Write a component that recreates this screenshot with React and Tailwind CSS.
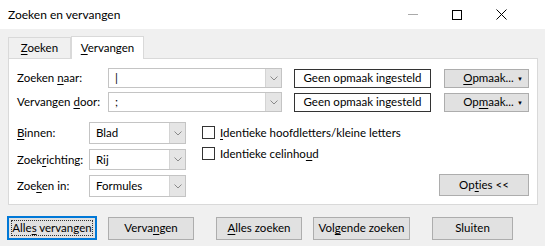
import React from "react";

const font = { fontFamily: 'Lato, "Noto Sans", "Liberation Sans", sans-serif' };

function U({ children }) {
  return <span className="underline underline-offset-2">{children}</span>;
}

function Chevron() {
  return (
    <svg width="8" height="5" viewBox="0 0 8 5" className="block">
      <path d="M0.5 0.5 L4 4 L7.5 0.5" fill="none" stroke="#8a8a8a" strokeWidth="1" />
    </svg>
  );
}

function Combo({ value, className }) {
  return (
    <div className={"flex bg-white border border-[#c4c4c4] " + className}>
      <div className="flex-1 flex items-center pl-[6px] text-black">{value}</div>
      <div className="w-[16px] bg-[#e5e5e5] border-l border-[#d4d4d4] flex items-center justify-center">
        <Chevron />
      </div>
    </div>
  );
}

function Btn({ children, className = "" }) {
  return (
    <div
      className={
        "flex items-center justify-center whitespace-nowrap bg-[#e1e1e1] border border-[#adadad] text-black " +
        className
      }
    >
      {children}
    </div>
  );
}

function Check({ children }) {
  return (
    <div className="flex items-center gap-[5px] h-[21px]">
      <div className="w-[13px] h-[13px] border border-[#333] bg-white" />
      <span className="text-black whitespace-nowrap">{children}</span>
    </div>
  );
}

export default function App() {
  return (
    <div style={font} className="w-[545px] h-[246px] bg-[#f0f0f0] overflow-hidden select-none whitespace-nowrap text-[11.5px]">
      {/* Title bar */}
      <div className="h-[29px] bg-white flex items-center">
        <span className="ml-[8px] text-[12px] text-black">Zoeken en vervangen</span>
        <div className="ml-auto mr-[22px] flex items-center h-full">
          <div className="w-[44px] flex justify-center">
            <div className="w-[10px] h-px bg-[#aaa]" />
          </div>
          <div className="w-[44px] flex justify-center">
            <div className="w-[10px] h-[10px] border border-black" />
          </div>
          <div className="w-[44px] flex justify-center">
            <svg width="11" height="11" viewBox="0 0 11 11">
              <path d="M0.5 0.5 L10.5 10.5 M10.5 0.5 L0.5 10.5" stroke="#000" strokeWidth="1" />
            </svg>
          </div>
        </div>
      </div>

      {/* Tabs */}
      <div className="flex items-end pl-[8px] mt-[6px] h-[23px]">
        <div className="h-[21px] w-[63px] border border-b-0 border-[#d9d9d9] flex items-center justify-center text-black">
          <span><U>Z</U>oeken</span>
        </div>
        <div className="h-[23px] w-[73px] bg-white border border-b-0 border-[#d9d9d9] flex items-center justify-center text-black relative z-10 -mb-px">
          <span><U>V</U>ervangen</span>
        </div>
      </div>

      {/* Panel */}
      <div className="ml-[8px] w-[530px] h-[147px] bg-white border border-[#d9d9d9] pl-[8px] pt-[9px] text-black">
        <div className="flex items-center h-[20px]">
          <div className="w-[91px]">Zoeken <U>n</U>aar:</div>
          <Combo value="|" className="w-[174px] h-[20px]" />
          <div className="ml-[12px] w-[137px] h-[19px] border border-[#333] flex items-center justify-center">
            Geen opmaak ingesteld
          </div>
          <Btn className="ml-[13px] w-[85px] h-[19px] relative">
            <span className="ml-[4px]"><U>O</U>pmaak...</span>
            <span className="absolute right-[5px] text-[6px]">▼</span>
          </Btn>
        </div>
        <div className="flex items-center h-[20px] mt-[4px]">
          <div className="w-[91px]">Vervangen <U>d</U>oor:</div>
          <Combo value=";" className="w-[174px] h-[20px]" />
          <div className="ml-[12px] w-[137px] h-[19px] border border-[#333] flex items-center justify-center">
            Geen opmaak ingesteld
          </div>
          <Btn className="ml-[13px] w-[85px] h-[19px] relative">
            <span className="ml-[4px]">Op<U>m</U>aak...</span>
            <span className="absolute right-[5px] text-[6px]">▼</span>
          </Btn>
        </div>

        <div className="flex mt-[10px]">
          <div className="flex flex-col gap-[5px]">
            <div className="flex items-center">
              <div className="w-[72px]"><U>B</U>innen:</div>
              <Combo value="Blad" className="w-[97px] h-[22px]" />
            </div>
            <div className="flex items-center">
              <div className="w-[72px]">Zoek<U>r</U>ichting:</div>
              <Combo value="Rij" className="w-[97px] h-[21px]" />
            </div>
            <div className="flex items-center">
              <div className="w-[72px]">Zoe<U>k</U>en in:</div>
              <Combo value="Formules" className="w-[97px] h-[22px]" />
            </div>
          </div>
          <div className="ml-[16px] flex flex-col">
            <Check><U>I</U>dentieke hoofdletters/kleine letters</Check>
            <Check>Identieke celinho<U>u</U>d</Check>
          </div>
          <div className="ml-auto mr-[8px] self-end mb-[1px]">
            <Btn className="w-[90px] h-[22px]">Op<U>t</U>ies &lt;&lt;</Btn>
          </div>
        </div>
      </div>

      {/* Bottom buttons */}
      <div className="flex items-center mt-[11px] pl-[7px]">
        <div className="w-[90px] h-[24px] border-2 border-[#0078d7] bg-[#e1e1e1] p-[2px]">
          <div className="w-full h-full border border-dotted border-[#333] flex items-center justify-center text-black">
            <span>Alle<U>s</U> vervangen</span>
          </div>
        </div>
        <Btn className="ml-[11px] w-[86px] h-[23px]">Verva<U>n</U>gen</Btn>
        <Btn className="ml-[22px] w-[86px] h-[23px]"><U>A</U>lles zoeken</Btn>
        <Btn className="ml-[11px] w-[97px] h-[23px]">Vol<U>g</U>ende zoeken</Btn>
        <Btn className="ml-[22px] w-[81px] h-[23px]">Sluiten</Btn>
      </div>
    </div>
  );
}
